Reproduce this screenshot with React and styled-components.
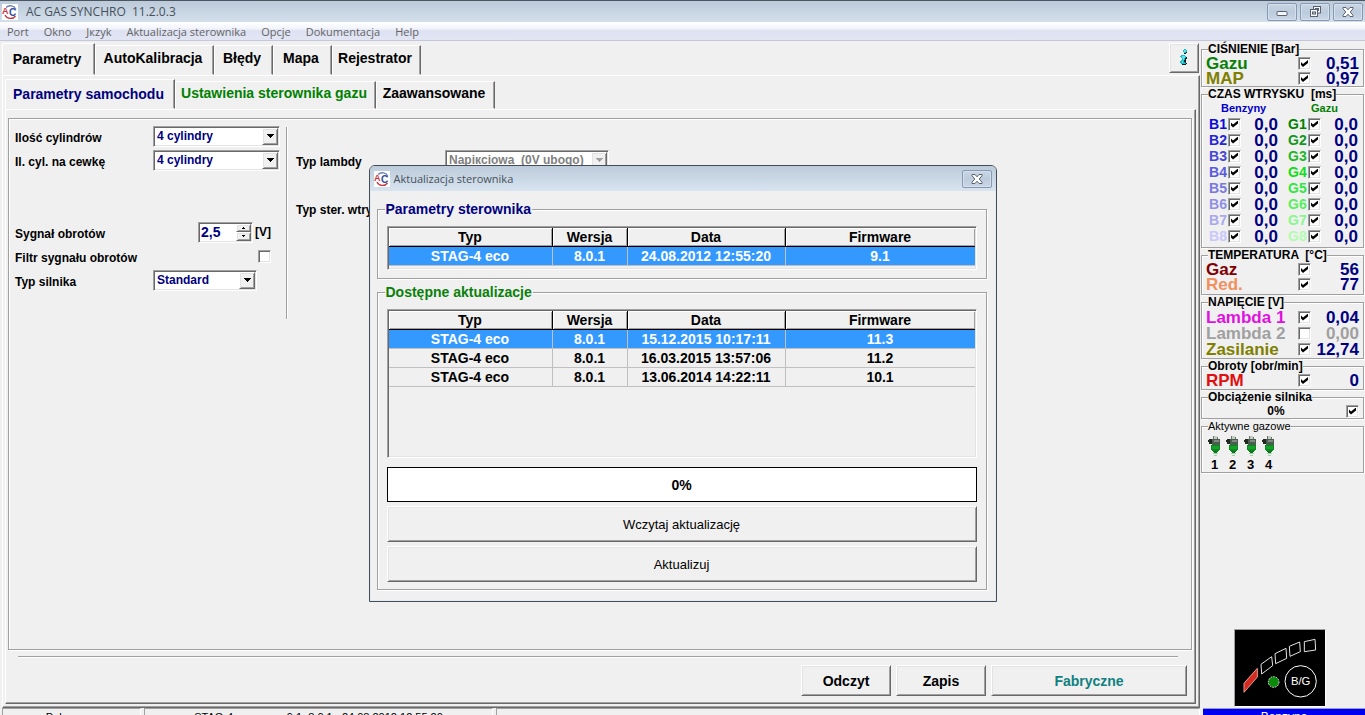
import React from 'react';
import styled, { createGlobalStyle, css } from 'styled-components';

const GlobalStyle = createGlobalStyle`
  * {
    box-sizing: border-box;
  }
  body {
    margin: 0;
    background-color: #f0f0f0;
    font-family: 'Liberation Sans', Arial, sans-serif;
    font-size: 12px;
    color: #000;
  }
  button, input, select {
    font-family: inherit;
    margin: 0;
    padding: 0;
  }
`;

const raised = css`
  border: 1px solid;
  border-color: #fff #696969 #696969 #fff;
  box-shadow: inset 1px 1px #e3e3e3, inset -1px -1px #a0a0a0;
  background-color: #f0f0f0;
`;

const sunken = css`
  border: 1px solid;
  border-color: #a0a0a0 #fff #fff #a0a0a0;
  box-shadow: inset 1px 1px #696969, inset -1px -1px #e3e3e3;
`;

const Window = styled.div`
  position: relative;
  display: flex;
  flex-direction: column;
  height: 100vh;
  overflow: hidden;
`;

const TitleBar = styled.header`
  display: flex;
  align-items: center;
  flex: none;
  height: 22px;
  padding: 0 2px;
  border-top: 1px solid #4b5661;
  background: linear-gradient(#bccad9, #d3dfeb);
`;

const TitleText = styled.h1`
  flex: 1;
  margin: 0 0 0 8px;
  font-family: 'Open Sans', sans-serif;
  font-size: 12px;
  font-weight: 400;
  line-height: 16px;
  color: #46505a;
  white-space: pre;
`;

const CaptionButtons = styled.div`
  display: flex;
  gap: 3px;
`;

const CaptionButton = styled.button`
  display: flex;
  align-items: center;
  justify-content: center;
  width: 30px;
  height: 18px;
  border: 1px solid #8798b3;
  border-radius: 2px;
  background: linear-gradient(#c9d6e4, #bccbdc 50%, #c8d6e6);
  box-shadow: inset 0 0 0 1px #d5e0ec;
`;

const MenuBar = styled.nav`
  display: flex;
  align-items: center;
  flex: none;
  gap: 15px;
  height: 19px;
  padding: 2px 7px 0;
  border-bottom: 1px solid #c4c8d8;
  background: linear-gradient(#fff, #f3f5fb 35%, #dde1f2 50%, #e2e6f4);
`;

const MenuItem = styled.button`
  border: 0;
  background: none;
  font-family: 'Open Sans', sans-serif;
  font-size: 11px;
  line-height: 16px;
  color: #646464;
`;

const Body = styled.div`
  display: flex;
  flex: 1;
  min-height: 0;
  gap: 1px;
`;

const Main = styled.main`
  display: flex;
  flex-direction: column;
  flex: 1;
  min-width: 0;
  padding: 2px 0 0 2px;
`;

const TabRow = styled.div`
  display: flex;
  align-items: flex-end;
  flex: none;
  height: ${({ $height }) => $height}px;
`;

const Tab = styled.button`
  flex: none;
  width: ${({ $width }) => $width}px;
  height: ${({ $active }) => ($active ? '100%' : 'calc(100% - 2px)')};
  padding-right: 3px;
  padding-bottom: ${({ $active }) => ($active ? 0 : 4)}px;
  border: 1px solid;
  border-color: #fff #696969 transparent #fff;
  border-top-left-radius: 2px;
  box-shadow: inset -1px 0 #a0a0a0;
  background-color: #f0f0f0;
  font-size: 14px;
  font-weight: 700;
  white-space: nowrap;
  color: ${({ $color }) => $color || '#000'};
`;

const InfoButton = styled.button`
  ${raised}
  display: flex;
  align-items: center;
  justify-content: center;
  align-self: flex-start;
  width: 30px;
  height: 30px;
  margin: 0 1px 0 auto;
`;

const Sheet = styled.section`
  display: flex;
  flex-direction: column;
  flex: 1;
  min-height: 0;
  padding: ${({ $pad }) => $pad};
  border: 1px solid;
  border-color: #fff #696969 #696969 #fff;
  box-shadow: inset -1px -1px #a0a0a0;
`;

const etched = css`
  border: 1px solid #a0a0a0;
  box-shadow: 1px 1px #fff, inset 1px 1px #fff;
`;

const FormPanel = styled.div`
  ${etched}
  display: flex;
  flex: 1;
  min-height: 0;
  padding: 5px 6px;
`;

const FormColumn = styled.div`
  flex: none;
  width: ${({ $width }) => $width}px;
`;

const ColumnDivider = styled.div`
  width: 2px;
  height: 192px;
  margin: 3px 8px 0 6px;
  border-left: 1px solid #a0a0a0;
  background-color: #fff;
`;

const FieldRow = styled.div`
  display: flex;
  align-items: center;
  height: 24px;
`;

const FieldLabel = styled.label`
  flex: none;
  width: ${({ $width }) => $width}px;
  padding-top: 3px;
  font-weight: 700;
  line-height: 16px;
  white-space: nowrap;
`;

const FieldControl = styled.div`
  display: flex;
  align-items: center;
  justify-content: ${({ $end }) => ($end ? 'flex-end' : 'flex-start')};
  flex: 1;
  gap: 2px;
  padding-right: ${({ $end }) => ($end ? 9 : 0)}px;
  font-weight: 700;
`;

const ComboBox = styled.div`
  display: grid;
  width: ${({ $width }) => $width}px;
  height: 21px;

  > * {
    grid-area: 1 / 1;
  }
`;

const ComboSelect = styled.select`
  ${sunken}
  appearance: none;
  width: 100%;
  height: 21px;
  padding: 0 18px 0 3px;
  border-radius: 0;
  background-color: #fff;
  font-size: 12px;
  font-weight: 700;
  color: #000080;

  &:disabled {
    color: #808080;
    opacity: 1;
  }
`;

const ComboArrow = styled.span`
  ${raised}
  display: flex;
  align-items: center;
  justify-content: center;
  justify-self: end;
  width: 16px;
  height: 17px;
  margin: 2px;
  pointer-events: none;
`;

const SpinBox = styled.div`
  ${sunken}
  display: flex;
  width: 55px;
  height: 21px;
  padding: 1px 1px 1px 2px;
  background-color: #fff;
`;

const SpinInput = styled.input`
  flex: 1;
  min-width: 0;
  border: 0;
  background: none;
  font-size: 14px;
  font-weight: 700;
  color: #000080;
`;

const SpinButtons = styled.div`
  display: grid;
  grid-template-rows: 1fr 1fr;
  width: 15px;
`;

const SpinButton = styled.button`
  ${raised}
  display: flex;
  align-items: center;
  justify-content: center;
`;

const CheckInput = styled.input.attrs({ type: 'checkbox' })`
  ${sunken}
  appearance: none;
  display: flex;
  align-items: center;
  justify-content: center;
  flex: none;
  width: 13px;
  height: 13px;
  background-color: #fff;

  &:checked::before {
    content: '';
    width: 7px;
    height: 7px;
    background-color: #000;
    clip-path: polygon(0 2px, 2px 4px, 7px 0, 7px 3px, 2px 7px, 0 5px);
  }
`;

const Rule = styled.hr`
  flex: none;
  width: calc(100% - 24px);
  height: 2px;
  margin: 6px 0 7px 10px;
  border: 0;
  border-top: 1px solid #a0a0a0;
  background-color: #fff;
`;

const Actions = styled.div`
  display: flex;
  justify-content: flex-end;
  flex: none;
  gap: 5px;
  padding-right: 5px;
`;

const ActionButton = styled.button`
  ${raised}
  width: ${({ $width }) => $width}px;
  height: 31px;
  font-size: 14px;
  font-weight: 700;
  color: ${({ $color }) => $color || '#000'};
`;

const Sidebar = styled.aside`
  display: flex;
  flex-direction: column;
  flex: none;
  width: 164px;
  padding: 1px 1px 0 0;
`;

const Group = styled.fieldset`
  ${etched}
  min-width: 0;
  margin: 0;
  padding: 0 4px ${({ $bottom }) => $bottom || 0}px 4px;
`;

const GroupTitle = styled.legend`
  margin-left: 2px;
  padding: 0;
  background-color: #f0f0f0;
  font-size: ${({ $light }) => ($light ? 11 : 12)}px;
  font-weight: ${({ $light }) => ($light ? 400 : 700)};
  line-height: 14px;
  white-space: pre;
`;

const Reading = styled.label`
  display: grid;
  grid-template-columns: 92px 13px 1fr;
  align-items: center;
  height: ${({ $height }) => $height}px;
  font-size: 17px;
  font-weight: 700;
  line-height: 15px;
  white-space: nowrap;
  color: ${({ $color }) => $color};
`;

const Value = styled.output`
  font-size: 17px;
  font-weight: 700;
  line-height: 15px;
  text-align: right;
  color: ${({ $off }) => ($off ? '#a0a0a0' : '#000080')};
`;

const Injection = styled.div`
  display: grid;
  grid-template-columns: 69px 70px;
  column-gap: 10px;
  padding-left: 3px;
`;

const InjectionHead = styled.div`
  height: 15px;
  padding-left: ${({ $indent }) => $indent}px;
  font-size: 11px;
  font-weight: 700;
  line-height: 15px;
  color: ${({ $color }) => $color};
`;

const InjectionCell = styled.label`
  display: grid;
  grid-template-columns: ${({ $label }) => $label}px 13px 1fr;
  align-items: center;
  height: 16px;
  font-size: 14px;
  font-weight: 700;
  color: ${({ $color }) => $color};
`;

const LoadRow = styled.label`
  display: grid;
  grid-template-columns: 1fr 13px;
  align-items: center;
  height: 14px;
  font-weight: 700;
  text-align: center;
`;

const Injectors = styled.div`
  display: flex;
  gap: 5px;
  height: 39px;
  padding: 3px 0 0 2px;
`;

const Injector = styled.div`
  display: flex;
  flex-direction: column;
  align-items: center;
  width: 13px;
  font-size: 13px;
  font-weight: 700;
  line-height: 15px;

  svg {
    flex: none;
  }
`;

const SwitchPanel = styled.button`
  width: 92px;
  height: 78px;
  margin: auto 0 1px 33px;
  border: 1px solid;
  border-color: #a0a0a0 #fff #fff #a0a0a0;
  background-color: #000;

  svg {
    display: block;
  }
`;

const StatusBar = styled.footer`
  display: flex;
  flex: none;
  gap: 3px;
  height: 7px;
  padding-left: 2px;
  overflow: hidden;
`;

const StatusCell = styled.div`
  flex: ${({ $width }) => ($width ? `0 0 ${$width}px` : '1')};
  height: 20px;
  padding-top: 1px;
  border: 1px solid;
  border-color: #a0a0a0 #fff #fff #a0a0a0;
  font-size: 11px;
  line-height: 14px;
  text-align: center;
  white-space: pre;
`;

const FuelCell = styled.div`
  flex: 0 0 162px;
  height: 20px;
  padding-top: 1px;
  border-top: 1px solid #9a9acb;
  background-color: #0000f0;
  font-size: 12px;
  line-height: 14px;
  text-align: center;
  color: #fff;
`;

const DialogLayer = styled.div`
  position: absolute;
  inset: 0;
  display: flex;
  align-items: flex-start;
  justify-content: center;
  padding-top: 165px;
`;

const Dialog = styled.div`
  width: 628px;
  padding-bottom: 11px;
  border: 1px solid #454c55;
  border-radius: 6px 6px 0 0;
  box-shadow: inset 0 0 0 1px #e4ebf2;
  background-color: #f0f0f0;
  overflow: hidden;
`;

const DialogBar = styled.div`
  display: flex;
  align-items: center;
  height: 25px;
  padding: 0 4px;
  background: linear-gradient(#bccbda, #d8e4f0);
`;

const DialogTitle = styled.h2`
  flex: 1;
  margin: 0 0 0 4px;
  font-family: 'Open Sans', sans-serif;
  font-size: 11px;
  font-weight: 400;
  line-height: 16px;
  color: #46505a;
`;

const DialogGroup = styled.fieldset`
  ${etched}
  min-width: 0;
  margin: ${({ $top }) => $top}px 9px 0 7px;
  padding: 9px 9px ${({ $bottom }) => $bottom}px;
`;

const DialogLegend = styled.legend`
  margin-left: -2px;
  padding: 0 1px;
  background-color: #f0f0f0;
  font-size: 14px;
  font-weight: 700;
  line-height: 16px;
  color: ${({ $color }) => $color};
`;

const TableFrame = styled.div`
  ${sunken}
  height: ${({ $height }) => $height}px;
  padding: 1px;
`;

const Table = styled.table`
  width: 100%;
  table-layout: fixed;
  border-spacing: 0;
  font-size: 14px;
  font-weight: 700;
  text-align: center;
`;

const Th = styled.th`
  width: ${({ $width }) => ($width ? `${$width}px` : 'auto')};
  height: 19px;
  padding: 0;
  border-right: 1px solid #000;
  border-bottom: 1px solid #000;
  box-shadow: inset 1px 1px #fff, inset -1px -1px #a0a0a0;
  line-height: 16px;

  &:last-child {
    border-right: 0;
  }
`;

const Td = styled.td`
  height: 19px;
  padding: 0;
  border-right: 1px solid #c0c0c0;
  border-bottom: 1px solid #c0c0c0;
  line-height: 16px;

  &:last-child {
    border-right: 0;
  }
`;

const Tr = styled.tr`
  color: ${({ $selected }) => ($selected ? '#fff' : '#000')};
  background-color: ${({ $selected }) => ($selected ? '#3399ff' : 'transparent')};
`;

const ProgressBox = styled.div`
  display: flex;
  align-items: center;
  justify-content: center;
  height: 35px;
  margin-top: 9px;
  border: 1px solid #000;
  background-color: #fff;
  font-size: 14px;
  font-weight: 700;
`;

const WideButton = styled.button`
  ${raised}
  display: block;
  width: 100%;
  height: 36px;
  margin-top: 4px;
  font-size: 13px;
`;

const mainTabs = [
  { name: 'Parametry', width: 93, active: true },
  { name: 'AutoKalibracja', width: 119 },
  { name: 'Błędy', width: 59 },
  { name: 'Mapa', width: 59 },
  { name: 'Rejestrator', width: 89 },
];

const paramTabs = [
  { name: 'Parametry samochodu', width: 170, color: '#000080', active: true },
  { name: 'Ustawienia sterownika gazu', width: 201, color: '#008000' },
  { name: 'Zaawansowane', width: 119 },
];

const menu = ['Port', 'Okno', 'Jкzyk', 'Aktualizacja sterownika', 'Opcje', 'Dokumentacja', 'Help'];

const petrolColors = ['#0a0ae0', '#2424d8', '#4646d6', '#5a5ae0', '#7878e0', '#9090e8', '#a8a8ee', '#c8c8fa'];
const gasColors = ['#008000', '#10981c', '#20b828', '#10e018', '#30e840', '#58ee60', '#88f88c', '#b0fcb0'];

const current = [['STAG-4 eco', '8.0.1', '24.08.2012 12:55:20', '9.1']];
const updates = [
  ['STAG-4 eco', '8.0.1', '15.12.2015 10:17:11', '11.3'],
  ['STAG-4 eco', '8.0.1', '16.03.2015 13:57:06', '11.2'],
  ['STAG-4 eco', '8.0.1', '13.06.2014 14:22:11', '10.1'],
];

const Logo = () => (
  <svg width="16" height="16" viewBox="0 0 16 16">
    <rect width="16" height="16" fill="#fff" />
    <path d="M3 11A6.200 6.200 0 0 0 13.500 12" fill="none" stroke="#c8323a" strokeWidth="1.3" />
    <path d="M4 3.500A6.200 6.200 0 0 1 14 5.500" fill="none" stroke="#6c7fb8" strokeWidth="1.3" />
    <text x="0" y="10" fontSize="9" fontWeight="700" fill="#c8323a">A</text>
    <text x="7" y="12" fontSize="10" fontWeight="700" fill="#34509c">C</text>
  </svg>
);

const CloseIcon = () => (
  <svg width="12" height="10" viewBox="0 0 12 10">
    <path d="M1 .5h3l2 2.3L8 .5h3v1.3L8.200 5 11 8.200v1.300H8L6 7.200 4 9.500H1V8.200L3.800 5 1 1.800z" fill="#fff" stroke="#5a6270" />
  </svg>
);

const MinimizeIcon = () => (
  <svg width="12" height="10" viewBox="0 0 12 10">
    <rect x="1" y="4.500" width="10" height="4" rx=".5" fill="#f4f7fa" stroke="#5a6270" />
  </svg>
);

const RestoreIcon = () => (
  <svg width="13" height="11" viewBox="0 0 13 11">
    <rect x="4.500" y=".5" width="7" height="6.500" fill="#f4f7fa" stroke="#5a6270" />
    <rect x="6.500" y="2.500" width="3" height="2" fill="#bccbdc" stroke="#5a6270" />
    <rect x="1.500" y="3.500" width="7" height="7" fill="#f4f7fa" stroke="#5a6270" />
    <rect x="3.500" y="6" width="3" height="2" fill="#bccbdc" stroke="#5a6270" />
  </svg>
);

const InfoIcon = () => (
  <svg width="10" height="18" viewBox="0 0 10 18" shapeRendering="crispEdges">
    <path d="M5 1h3v3H7v1H5zM2 7h5v1h1v2H7v4h1v1H7v1H3v-1H2v-1h2v-3H3V9H2z" fill="#102024" />
    <path d="M5 0h2v1h1v2H7v1H5V3H4V1h1zM2 6h4v1h1v2H6v2H5v2h1v1h1v1H2v-1H1v-2h1v-1h1V9H2V8H1V7h1z" fill="#20b8c4" />
    <path d="M5 1h2v2H5zM3 7h3v2H5v2H4v3H3v-2h1V9H3z" fill="#58e8ee" />
  </svg>
);

const Arrow = ({ color = '#000' }) => (
  <svg width="7" height="4" viewBox="0 0 7 4" shapeRendering="crispEdges">
    <path d="M0 0h7v1H6v1H5v1H4v1H3V3H2V2H1V1H0z" fill={color} />
  </svg>
);

const SpinArrow = ({ up }) => (
  <svg width="3" height="2" viewBox="0 0 3 2" shapeRendering="crispEdges">
    <path d={up ? 'M1 0h1v1h1v1H0V1h1z' : 'M0 0h3v1H2v1H1V1H0z'} />
  </svg>
);

const InjectorIcon = () => (
  <svg width="13" height="21" viewBox="0 0 13 21" shapeRendering="crispEdges">
    <path d="M5 0h4v3H5z" fill="#c4ccc4" />
    <path d="M5 0h1v3H5zM9 1h1v2H9z" fill="#6c746c" />
    <path d="M0 4h1V3h3v1h2v3H4v1H1V6H0z" fill="#202820" />
    <path d="M4 3h8v6H4z" fill="#4c5c50" />
    <path d="M6 4h5v2H6z" fill="#7c8c80" />
    <path d="M3 9h9v5h-1v1H4v-1H3z" fill="#0c8a20" />
    <path d="M4 10h7v3H4z" fill="#12a428" />
    <path d="M5 15h5v1H9v1H6v-1H5z" fill="#186c28" />
    <path d="M5 17h5v1H5zM6 19h3v1H6z" fill="#98d8a0" />
  </svg>
);

const SwitchDrawing = () => (
  <svg width="90" height="76" viewBox="28 30 270 228">
    <g fill="none" stroke="#e4e4e4" strokeWidth="3">
      <path d="M55 190l40-45v26l-40 46z" fill="#d42a22" stroke="#e89890" />
      <path d="M106 133l32-23 3 27-33 25z" />
      <path d="M148 101l33-16 2 30-33 16z" />
      <path d="M191 79l31-13 2 29-31 14z" />
      <path d="M236 65l32-7 2 32-34 5z" />
      <circle cx="144" cy="186" r="16" fill="#0a8a0a" strokeDasharray="5 3" />
      <circle cx="225" cy="184" r="47" stroke="#fff" />
    </g>
    <text x="225" y="196" fontSize="34" textAnchor="middle" fill="#fff">B/G</text>
  </svg>
);

const Combo = ({ id, width, value, disabled }) => (
  <ComboBox $width={width}>
    <ComboSelect id={id} disabled={disabled} defaultValue={value}>
      <option>{value}</option>
    </ComboSelect>
    <ComboArrow>
      <Arrow color={disabled ? '#a0a0a0' : '#000'} />
    </ComboArrow>
  </ComboBox>
);

const ReadingRow = ({ name, value, color, height = 15, off }) => (
  <Reading $color={color} $height={height}>
    {name}
    <CheckInput defaultChecked={!off} />
    <Value $off={off}>{value}</Value>
  </Reading>
);

const VersionTable = ({ rows, height }) => (
  <TableFrame $height={height}>
    <Table>
      <thead>
        <tr>
          <Th $width={164}>Typ</Th>
          <Th $width={75}>Wersja</Th>
          <Th $width={158}>Data</Th>
          <Th>Firmware</Th>
        </tr>
      </thead>
      <tbody>
        {rows.map((row, i) => (
          <Tr key={row[2]} $selected={i === 0}>
            {row.map((cell) => (
              <Td key={cell}>{cell}</Td>
            ))}
          </Tr>
        ))}
      </tbody>
    </Table>
  </TableFrame>
);

const Tabs = ({ tabs }) =>
  tabs.map((tab) => (
    <Tab key={tab.name} $width={tab.width} $active={tab.active} $color={tab.color}>
      {tab.name}
    </Tab>
  ));

const CarForm = () => (
  <FormPanel>
    <FormColumn $width={265}>
      <FieldRow>
        <FieldLabel $width={138} htmlFor="cylinders">Ilość cylindrów</FieldLabel>
        <Combo id="cylinders" width={127} value="4 cylindry" />
      </FieldRow>
      <FieldRow>
        <FieldLabel $width={138} htmlFor="coil">Il. cyl. na cewkę</FieldLabel>
        <Combo id="coil" width={127} value="4 cylindry" />
      </FieldRow>
      <FieldRow />
      <FieldRow />
      <FieldRow>
        <FieldLabel $width={138} htmlFor="signal">Sygnał obrotów</FieldLabel>
        <FieldControl $end>
          <SpinBox>
            <SpinInput id="signal" defaultValue="2,5" />
            <SpinButtons>
              <SpinButton aria-label="+"><SpinArrow up /></SpinButton>
              <SpinButton aria-label="-"><SpinArrow /></SpinButton>
            </SpinButtons>
          </SpinBox>
          [V]
        </FieldControl>
      </FieldRow>
      <FieldRow>
        <FieldLabel $width={138} htmlFor="filter">Filtr sygnału obrotów</FieldLabel>
        <FieldControl $end>
          <CheckInput id="filter" />
        </FieldControl>
      </FieldRow>
      <FieldRow>
        <FieldLabel $width={138} htmlFor="engine">Typ silnika</FieldLabel>
        <Combo id="engine" width={104} value="Standard" />
      </FieldRow>
    </FormColumn>
    <ColumnDivider />
    <FormColumn $width={320}>
      <FieldRow />
      <FieldRow>
        <FieldLabel $width={149} htmlFor="lambda">Typ lambdy</FieldLabel>
        <Combo id="lambda" width={164} value={'Napiкciowa\u00a0 (0V ubogo)'} disabled />
      </FieldRow>
      <FieldRow />
      <FieldRow>
        <FieldLabel $width={149}>Typ ster. wtrysk.</FieldLabel>
      </FieldRow>
    </FormColumn>
  </FormPanel>
);

const Readings = () => (
  <Sidebar>
    <Group>
      <GroupTitle>CIŚNIENIE [Bar]</GroupTitle>
      <ReadingRow name="Gazu" value="0,51" color="#0a800a" />
      <ReadingRow name="MAP" value="0,97" color="#808000" />
    </Group>
    <Group $bottom={3}>
      <GroupTitle>{'CZAS WTRYSKU  [ms]'}</GroupTitle>
      <Injection>
        <InjectionHead $indent={12} $color="#0000c8">Benzyny</InjectionHead>
        <InjectionHead $indent={23} $color="#008000">Gazu</InjectionHead>
        {petrolColors.map((color, i) => (
          <React.Fragment key={color}>
            <InjectionCell $label={19} $color={color}>
              B{i + 1}
              <CheckInput defaultChecked />
              <Value>0,0</Value>
            </InjectionCell>
            <InjectionCell $label={20} $color={gasColors[i]}>
              G{i + 1}
              <CheckInput defaultChecked />
              <Value>0,0</Value>
            </InjectionCell>
          </React.Fragment>
        ))}
      </Injection>
    </Group>
    <Group $bottom={2}>
      <GroupTitle>{'TEMPERATURA  [°C]'}</GroupTitle>
      <ReadingRow name="Gaz" value="56" color="#800000" />
      <ReadingRow name="Red." value="77" color="#f09060" />
    </Group>
    <Group $bottom={1}>
      <GroupTitle>NAPIĘCIE [V]</GroupTitle>
      <ReadingRow name="Lambda 1" value="0,04" color="#e010e0" height={16} />
      <ReadingRow name="Lambda 2" value="0,00" color="#a0a0a0" height={16} off />
      <ReadingRow name="Zasilanie" value="12,74" color="#808000" height={16} />
    </Group>
    <Group $bottom={1}>
      <GroupTitle>Obroty [obr/min]</GroupTitle>
      <ReadingRow name="RPM" value="0" color="#e01010" />
    </Group>
    <Group>
      <GroupTitle>Obciążenie silnika</GroupTitle>
      <LoadRow>
        0%
        <CheckInput defaultChecked />
      </LoadRow>
    </Group>
    <Group>
      <GroupTitle $light>Aktywne gazowe</GroupTitle>
      <Injectors>
        {[1, 2, 3, 4].map((n) => (
          <Injector key={n}>
            <InjectorIcon />
            {n}
          </Injector>
        ))}
      </Injectors>
    </Group>
    <SwitchPanel aria-label="B/G">
      <SwitchDrawing />
    </SwitchPanel>
  </Sidebar>
);

const UpdateDialog = () => (
  <DialogLayer>
    <Dialog role="dialog" aria-labelledby="update-title">
      <DialogBar>
        <Logo />
        <DialogTitle id="update-title">Aktualizacja sterownika</DialogTitle>
        <CaptionButton aria-label="x"><CloseIcon /></CaptionButton>
      </DialogBar>
      <DialogGroup $top={10} $bottom={8}>
        <DialogLegend $color="#000080">Parametry sterownika</DialogLegend>
        <VersionTable rows={current} height={44} />
      </DialogGroup>
      <DialogGroup $top={5} $bottom={7}>
        <DialogLegend $color="#0a800a">Dostępne aktualizacje</DialogLegend>
        <VersionTable rows={updates} height={149} />
        <ProgressBox>0%</ProgressBox>
        <WideButton>Wczytaj aktualizację</WideButton>
        <WideButton>Aktualizuj</WideButton>
      </DialogGroup>
    </Dialog>
  </DialogLayer>
);

const App = () => {
  return (
    <Window>
      <GlobalStyle />
      <TitleBar>
        <Logo />
        <TitleText>{'AC GAS SYNCHRO  11.2.0.3'}</TitleText>
        <CaptionButtons>
          <CaptionButton aria-label="_"><MinimizeIcon /></CaptionButton>
          <CaptionButton aria-label="[]"><RestoreIcon /></CaptionButton>
          <CaptionButton aria-label="x"><CloseIcon /></CaptionButton>
        </CaptionButtons>
      </TitleBar>
      <MenuBar>
        {menu.map((item) => (
          <MenuItem key={item}>{item}</MenuItem>
        ))}
      </MenuBar>
      <Body>
        <Main>
          <TabRow $height={32}>
            <Tabs tabs={mainTabs} />
            <InfoButton aria-label="i"><InfoIcon /></InfoButton>
          </TabRow>
          <Sheet $pad="3px 3px 3px 2px">
            <TabRow $height={30}>
              <Tabs tabs={paramTabs} />
            </TabRow>
            <Sheet $pad="8px 3px 7px 2px">
              <CarForm />
              <Rule />
              <Actions>
                <ActionButton $width={90}>Odczyt</ActionButton>
                <ActionButton $width={90}>Zapis</ActionButton>
                <ActionButton $width={196} $color="#108080">Fabryczne</ActionButton>
              </Actions>
            </Sheet>
          </Sheet>
        </Main>
        <Readings />
      </Body>
      <StatusBar>
        <StatusCell $width={139}>Połączono</StatusCell>
        <StatusCell $width={349}>{'STAG-4 eco    ver. 9.1  8.0.1   24.08.2012 12:55:20'}</StatusCell>
        <StatusCell />
        <FuelCell>Benzyna</FuelCell>
      </StatusBar>
      <UpdateDialog />
    </Window>
  );
};

export default App;
